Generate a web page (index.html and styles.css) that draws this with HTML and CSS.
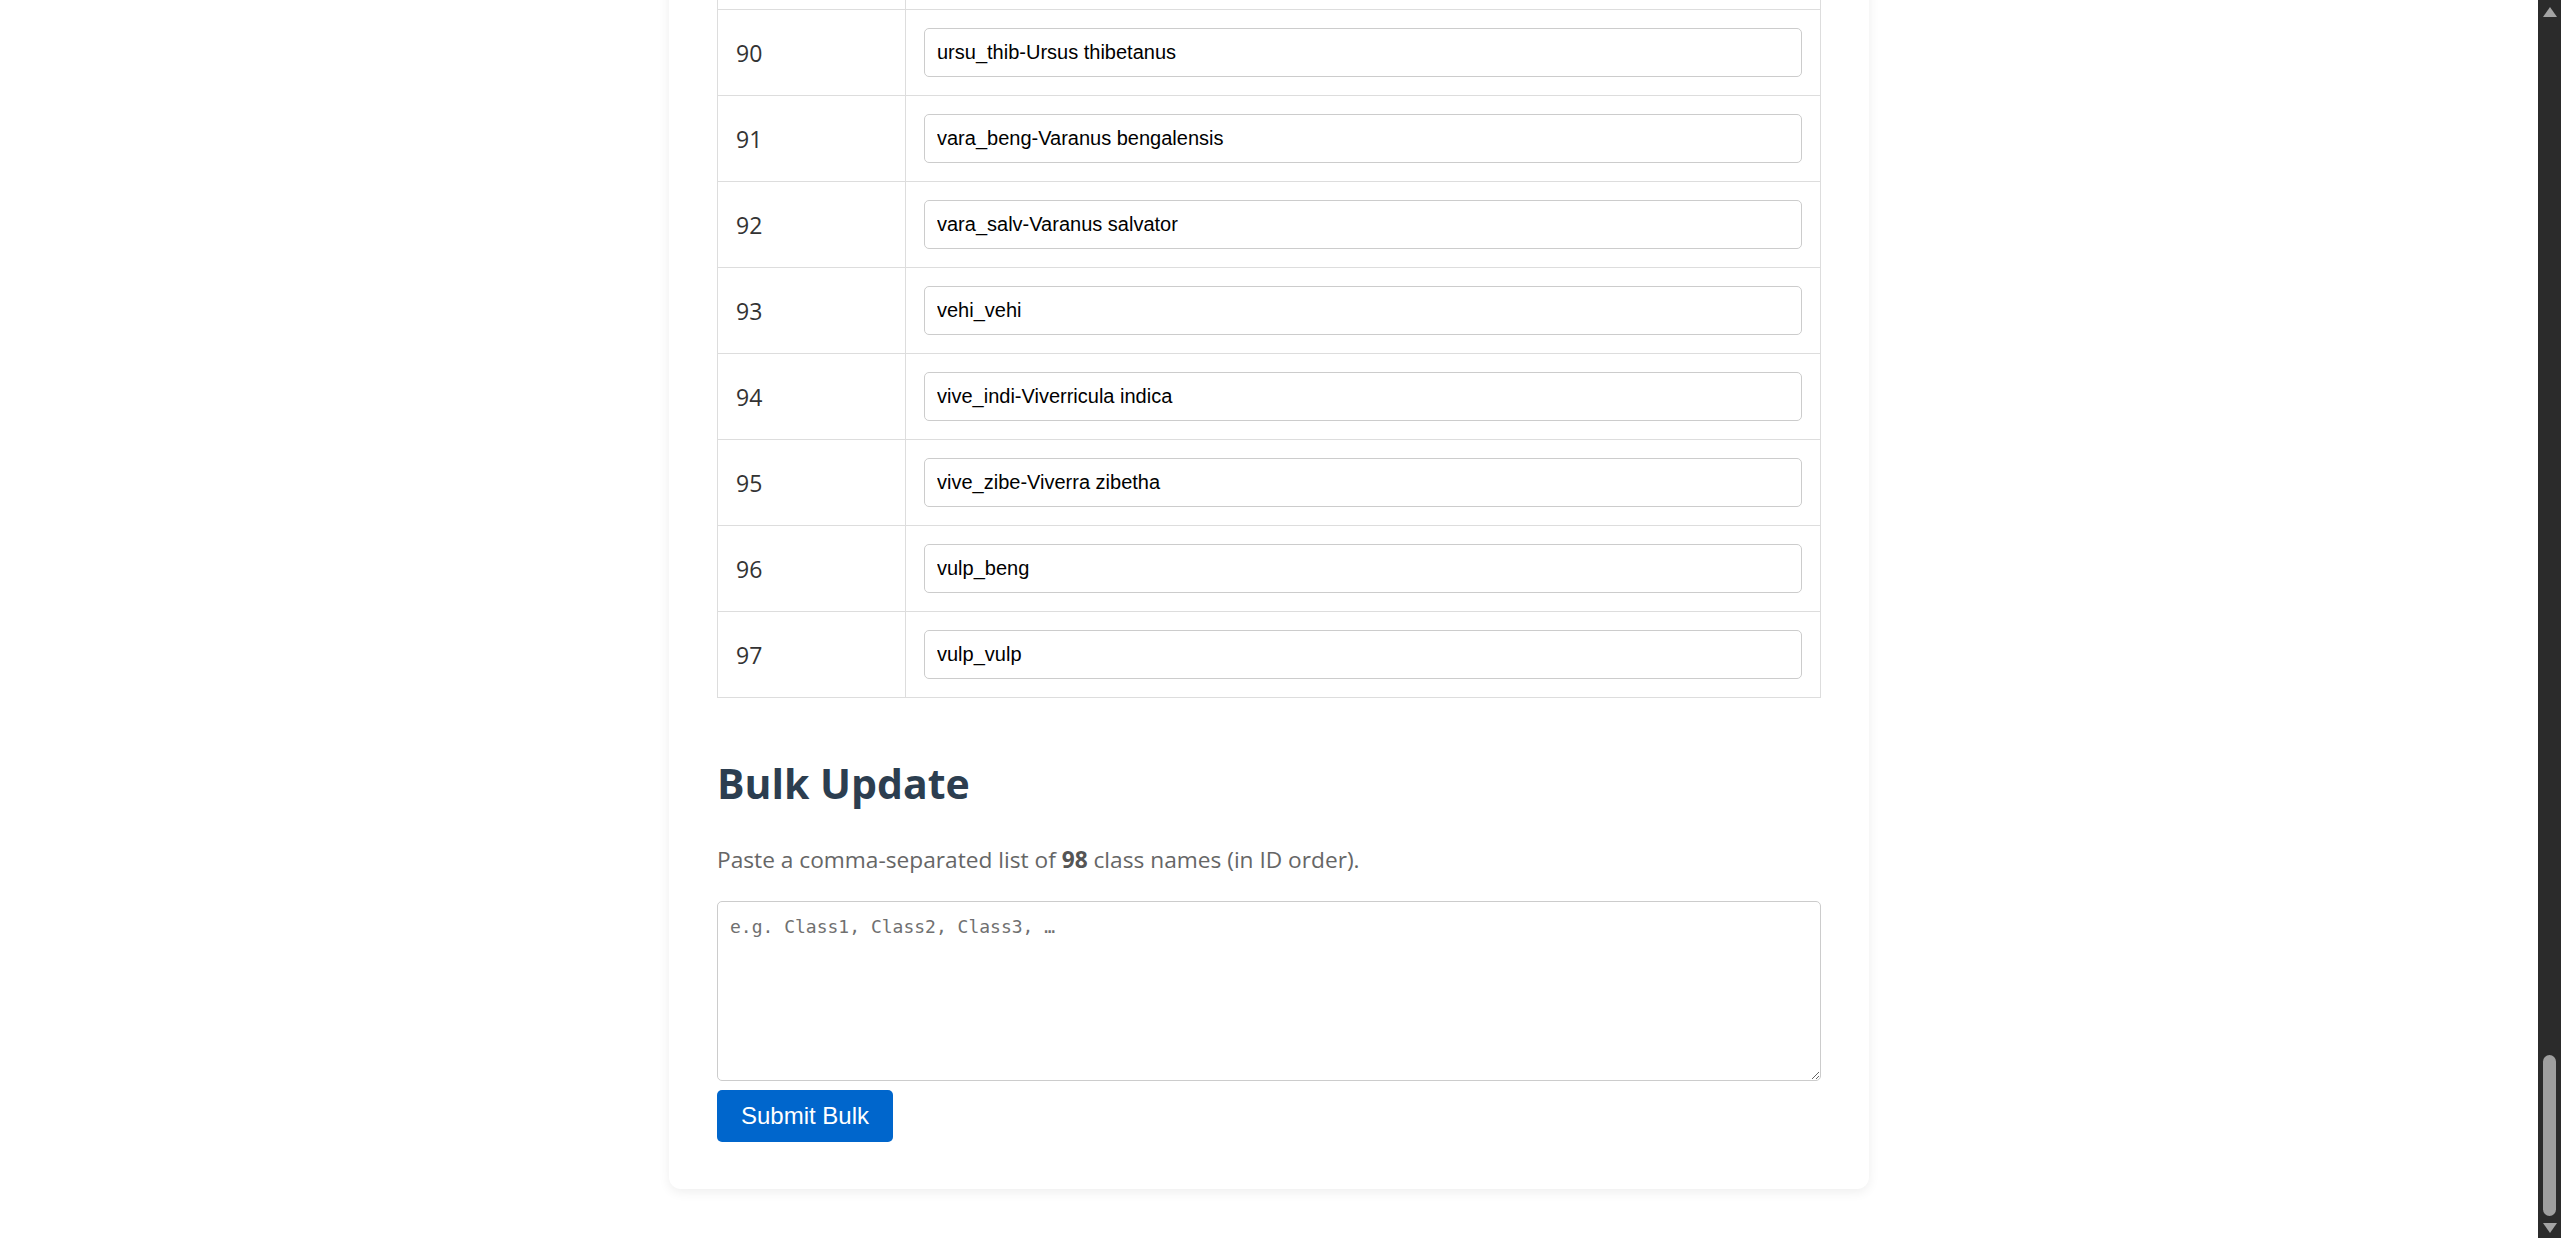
FILE: index.html
```html
<!DOCTYPE html>
<html lang="en">
<head>
<meta charset="utf-8">
<title>Class Names</title>
<link rel="stylesheet" href="styles.css">
</head>
<body>
<div class="viewport">
  <main class="page">
    <section class="card">
      <table class="class-table">
        <tbody>
          <tr class="clipped-row"><td class="id-cell"></td><td class="name-cell"></td></tr>
          <tr><td class="id-cell">90</td><td class="name-cell"><input class="name-input" type="text" value="ursu_thib-Ursus thibetanus"></td></tr>
          <tr><td class="id-cell">91</td><td class="name-cell"><input class="name-input" type="text" value="vara_beng-Varanus bengalensis"></td></tr>
          <tr><td class="id-cell">92</td><td class="name-cell"><input class="name-input" type="text" value="vara_salv-Varanus salvator"></td></tr>
          <tr><td class="id-cell">93</td><td class="name-cell"><input class="name-input" type="text" value="vehi_vehi"></td></tr>
          <tr><td class="id-cell">94</td><td class="name-cell"><input class="name-input" type="text" value="vive_indi-Viverricula indica"></td></tr>
          <tr><td class="id-cell">95</td><td class="name-cell"><input class="name-input" type="text" value="vive_zibe-Viverra zibetha"></td></tr>
          <tr><td class="id-cell">96</td><td class="name-cell"><input class="name-input" type="text" value="vulp_beng"></td></tr>
          <tr><td class="id-cell">97</td><td class="name-cell"><input class="name-input" type="text" value="vulp_vulp"></td></tr>
        </tbody>
      </table>

      <h2 class="section-title">Bulk Update</h2>
      <p class="section-hint">Paste a comma-separated list of <strong>98</strong> class names (in ID order).</p>

      <form class="bulk-form">
        <textarea class="bulk-text" placeholder="e.g. Class1, Class2, Class3, …"></textarea>
        <button class="bulk-submit" type="button">Submit Bulk</button>
      </form>
    </section>
  </main>

  <div class="scrollbar" aria-hidden="true">
    <div class="sb-btn"><span class="tri tri-up"></span></div>
    <div class="sb-track"><span class="sb-thumb"></span></div>
    <div class="sb-btn"><span class="tri tri-down"></span></div>
  </div>
</div>
</body>
</html>
```

FILE: styles.css
```css
html, body {
  margin: 0;
  padding: 0;
  height: 100%;
  background: #ffffff;
}

body {
  font-family: "Open Sans", "Noto Sans", "DejaVu Sans", sans-serif;
  color: #333333;
}

.viewport {
  display: flex;
  height: 100vh;
  overflow: hidden;
}

.page {
  flex: 1;
  min-width: 0;
  display: flex;
  flex-direction: column;
  justify-content: flex-end;
  align-items: center;
  overflow: hidden;
  padding-bottom: 49px;
}

.card {
  flex-shrink: 0;
  width: 1200px;
  box-sizing: border-box;
  padding: 48px 48px 47px;
  background: #ffffff;
  border-radius: 12px;
  box-shadow: 0 3px 12px rgba(0, 0, 0, 0.07);
}

/* table */
.class-table {
  width: 100%;
  border-collapse: collapse;
  table-layout: fixed;
  border: 1px solid #dddddd;
}

.class-table td {
  border: 1px solid #dddddd;
  padding: 18px;
  vertical-align: middle;
}

.clipped-row td {
  height: 49px;
}

.id-cell {
  width: 151px;
  font-size: 23px;
  color: #333333;
}

.name-input {
  display: block;
  width: 100%;
  box-sizing: border-box;
  height: 49px;
  padding: 12px;
  border: 1px solid #cccccc;
  border-radius: 5px;
  font-family: "Liberation Sans", Arial, sans-serif;
  font-size: 20px;
  color: #000000;
  background: #ffffff;
}

/* bulk section */
.section-title {
  margin: 60px 0 0;
  font-size: 41px;
  line-height: 50px;
  font-weight: 700;
  color: #2c3e50;
}

.section-hint {
  margin: 36px 0 0;
  font-size: 22.7px;
  line-height: 32px;
  color: #666666;
}

.section-hint strong {
  color: #555555;
  font-weight: 700;
}

.bulk-form {
  margin-top: 25px;
  display: flex;
  flex-direction: column;
  align-items: flex-start;
  gap: 9px;
}

.bulk-text {
  display: block;
  width: 100%;
  height: 180px;
  box-sizing: border-box;
  padding: 14px 12px;
  border: 1px solid #cccccc;
  border-radius: 5px;
  font-family: "DejaVu Sans Mono", "Liberation Mono", monospace;
  font-size: 18px;
  line-height: 22px;
  color: #000000;
  background: #ffffff;
}

.bulk-text::placeholder {
  color: #707070;
}

.bulk-submit {
  height: 52px;
  padding: 0 24px;
  border: none;
  border-radius: 5px;
  background: #0066cc;
  color: #ffffff;
  font-family: "Liberation Sans", Arial, sans-serif;
  font-size: 24px;
  cursor: pointer;
}

/* fake browser scrollbar (page is scrolled to bottom) */
.scrollbar {
  width: 23px;
  flex-shrink: 0;
  background: #2b2b2b;
  display: flex;
  flex-direction: column;
}

.sb-btn {
  height: 21px;
  display: flex;
  align-items: center;
  justify-content: center;
}

.sb-track {
  flex: 1;
  display: flex;
  flex-direction: column;
  justify-content: flex-end;
  align-items: center;
}

.sb-thumb {
  width: 13px;
  height: 161px;
  margin-bottom: 1px;
  border-radius: 7px;
  background: #9f9f9f;
}

.tri {
  width: 0;
  height: 0;
  border-left: 7px solid transparent;
  border-right: 7px solid transparent;
}

.tri-up {
  border-bottom: 10px solid #a3a3a3;
  margin-top: 3px;
}

.tri-down {
  border-top: 10px solid #a3a3a3;
}
```
